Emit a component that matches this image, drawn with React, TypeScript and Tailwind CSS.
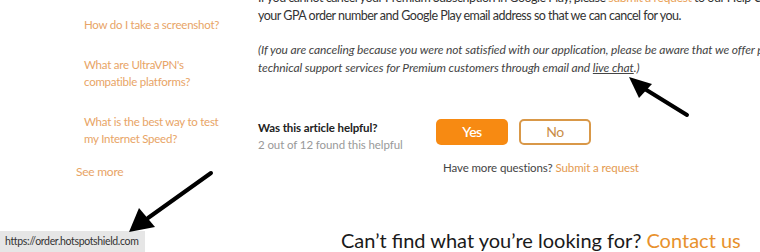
export default function App() {
  return (
    <div className="relative h-[252px] w-[760px] overflow-hidden bg-white font-['Lato',sans-serif] text-[#333]">
      <div className="flex">
        {/* sidebar */}
        <aside className="w-[258px] shrink-0 pl-[84px] pt-[16px] text-[11.5px] leading-[17px] tracking-[-0.25px] text-[#e8a466]">
          <ul className="flex flex-col gap-[23px]">
            <li>How do I take a screenshot?</li>
            <li>
              What are UltraVPN's
              <br />
              compatible platforms?
            </li>
            <li>
              What is the best way to test
              <br />
              my Internet Speed?
            </li>
          </ul>
          <div className="-ml-[8px] mt-[16px] text-[12px]">See more</div>
        </aside>

        {/* article */}
        <main className="-mt-[11px] min-w-0 flex-1 text-[12.5px] leading-[18px] tracking-[-0.5px]">
          <p className="whitespace-nowrap">
            If you cannot cancel your Premium Subscription in Google Play, please{' '}
            <span className="text-[#eaa55e]">submit a request</span> to our Help Center with
            <br />
            your GPA order number and Google Play email address so that we can cancel for you.
          </p>
          <p className="mt-[16px] whitespace-nowrap text-[12px] italic tracking-[-0.1px] text-[#444]">
            (If you are canceling because you were not satisfied with our application, please be aware that we offer premium
            <br />
            technical support services for Premium customers through email and{' '}
            <span className="underline">live chat</span>.)
          </p>

          <div className="mt-[42px] flex items-start">
            <div className="w-[178px]">
              <div className="text-[11.5px] font-bold leading-[17px] tracking-[-0.1px] text-[#222]">
                Was this article helpful?
              </div>
              <div className="text-[11.5px] leading-[17px] tracking-[-0.1px] text-[#999]">
                2 out of 12 found this helpful
              </div>
            </div>
            <div className="flex gap-[11px]">
              <button className="h-[26px] w-[72px] rounded-[5px] bg-[#f78a12] text-[14px] font-semibold text-white">
                Yes
              </button>
              <button className="h-[26px] w-[72px] rounded-[5px] border-2 border-[#d99848] text-[14px] text-[#c98d47]">
                No
              </button>
            </div>
          </div>
          <div className="ml-[185px] mt-[6px] text-[11.5px] leading-[17px] tracking-[-0.1px] text-[#444]">
            Have more questions? <span className="text-[#e49a50]">Submit a request</span>
          </div>
        </main>
      </div>

      <h2 className="absolute left-[341px] top-[226px] whitespace-nowrap text-[20px] leading-[28px] text-[#1a1a1a]">
        Can’t find what you’re looking for? <span className="text-[#e8912c]">Contact us</span>
      </h2>

      {/* browser status bar */}
      <div className="absolute bottom-0 left-0 flex h-[21px] w-[145px] items-center bg-[#e6e6e6] pl-[5px] text-[10.5px] tracking-[-0.35px] text-[#333]">
        https://order.hotspotshield.com
      </div>

      {/* annotation arrows */}
      <svg className="pointer-events-none absolute left-0 top-0" width="760" height="252">
        <line x1="687" y1="115" x2="640" y2="86" stroke="#000" strokeWidth="4" strokeLinecap="round" />
        <polygon points="629,77 652,84 639,98" fill="#000" />
        <line x1="211" y1="173" x2="148" y2="218" stroke="#000" strokeWidth="4" strokeLinecap="round" />
        <polygon points="129,232 139,208 155,227" fill="#000" />
      </svg>
    </div>
  )
}
